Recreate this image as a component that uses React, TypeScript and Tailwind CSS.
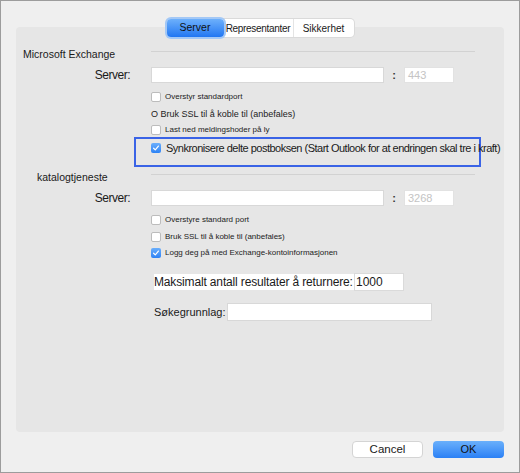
import React from 'react';

const Box = ({ checked }: { checked?: boolean }) =>
  checked ? (
    <span className="flex size-[10px] shrink-0 items-center justify-center rounded-[2px] bg-gradient-to-b from-[#6aaefb] to-[#2c82f5]">
      <svg viewBox="0 0 10 10" className="size-[8px]">
        <path d="M2 5.3 L4.1 7.3 L8 2.6" fill="none" stroke="white" strokeWidth="1.5" strokeLinecap="round" strokeLinejoin="round" />
      </svg>
    </span>
  ) : (
    <span className="block size-[10px] shrink-0 rounded-[2px] border border-[#bcbcbc] bg-white" />
  );

const CheckRow = ({ checked, label, className = '' }: { checked?: boolean; label: string; className?: string }) => (
  <div className={`flex h-[10px] items-center pl-[135px] ${className}`}>
    <Box checked={checked} />
    <span className="ml-[4px] whitespace-nowrap text-[8px] leading-[10px] text-[#222]">{label}</span>
  </div>
);

const ServerRow = ({ port, className = '' }: { port: string; className?: string }) => (
  <div className={`flex h-[16px] items-center ${className}`}>
    <span className="w-[135px] pr-[21px] text-right text-[12px] leading-[16px] tracking-[-0.5px] text-[#1a1a1a]">Server:</span>
    <div className="h-[16px] w-[233px] border border-[#d8d8d8] bg-white" />
    <span className="w-[20px] text-center text-[11px] font-bold leading-[16px] text-[#333]">:</span>
    <div className="flex h-[16px] w-[50px] items-center border border-[#e2e2e2] bg-white pl-[3px] text-[11px] text-[#c4c4c4]">{port}</div>
  </div>
);

const SectionHead = ({ title, indent, className = '' }: { title: string; indent: string; className?: string }) => (
  <div className={`flex h-[14px] items-start ${className}`}>
    <span className={`w-[135px] whitespace-nowrap text-[10.5px] leading-[14px] text-[#1a1a1a] ${indent}`}>{title}</span>
    <div className="mt-[4px] h-px w-[324px] bg-[#d2d2d2]" />
  </div>
);

export default function App() {
  return (
    <div className="flex h-[473px] w-[520px] flex-col border border-[#9c9c9c] bg-[#efefef] pt-[18px] font-['Liberation_Sans',Arial,sans-serif] text-[#1a1a1a]">
      {/* tabs */}
      <div className="relative z-10 flex justify-center">
        <div className="flex h-[18px] rounded-[4px] bg-white text-[10px] shadow-[0_0_0_1px_#dadada]">
          <div className="flex w-[57px] items-center justify-center rounded-[4px] bg-gradient-to-b from-[#6db0fb] to-[#1f76f2] text-[10.5px] text-[#111] shadow-[0_0_0_2px_#a3c8f6]">
            Server
          </div>
          <div className="flex w-[69px] items-center justify-center tracking-[-0.3px]">Representanter</div>
          <div className="flex w-[61px] items-center justify-center border-l border-[#e4e4e4]">Sikkerhet</div>
        </div>
      </div>

      {/* panel */}
      <div className="mx-[15px] -mt-[10px] flex h-[405px] flex-col rounded-[4px] bg-[#e6e6e6]">
        <SectionHead title="Microsoft Exchange" indent="pl-[7px]" className="mt-[20px]" />
        <ServerRow port="443" className="mt-[6px]" />
        <CheckRow label="Overstyr standardport" className="mt-[9px]" />
        <div className="mt-[6px] whitespace-nowrap pl-[135px] text-[9px] leading-[12px] text-[#222]">O Bruk SSL til å koble til (anbefales)</div>
        <CheckRow label="Last ned meldingshoder på ly" className="mt-[5px]" />

        <div className="ml-[118px] mt-[2px] flex h-[30px] w-[347px] items-start border-2 border-[#3a63e6] pl-[15px] pt-[2px]">
          <div className="flex h-[14px] items-center">
            <Box checked />
            <span className="ml-[5px] whitespace-nowrap text-[11px] leading-[14px] tracking-[-0.5px] text-[#1a1a1a]">
              Synkronisere delte postboksen (Start Outlook for at endringen skal tre i kraft)
            </span>
          </div>
        </div>

        <SectionHead title="katalogtjeneste" indent="pl-[21px]" className="mt-[3px]" />
        <ServerRow port="3268" className="mt-[6px]" />
        <CheckRow label="Overstyre standard port" className="mt-[9px]" />
        <CheckRow label="Bruk SSL til å koble til (anbefales)" className="mt-[7px]" />
        <CheckRow checked label="Logg deg på med Exchange-kontoinformasjonen" className="mt-[6px]" />

        <div className="mt-[15px] flex h-[18px] items-center pl-[138px]">
          <span className="h-[16px] w-[200px] overflow-hidden whitespace-nowrap bg-white text-[12px] leading-[16px] tracking-[-0.15px]">
            Maksimalt antall resultater å returnere:
          </span>
          <div className="flex h-[18px] w-[50px] items-center border border-[#dadada] bg-white pl-px text-[12px]">1000</div>
        </div>

        <div className="mt-[12px] flex h-[18px] items-center pl-[138px]">
          <span className="w-[73px] whitespace-nowrap text-[11px] leading-[16px]">Søkegrunnlag:</span>
          <div className="h-[18px] w-[205px] border border-[#d8d8d8] bg-white" />
        </div>
      </div>

      {/* buttons */}
      <div className="mt-[9px] flex justify-end gap-[10px] pr-[15px]">
        <button className="flex h-[17px] w-[71px] items-center justify-center rounded-[4px] border border-[#d4d4d4] bg-white text-[11.5px] text-[#1a1a1a]">
          Cancel
        </button>
        <button className="flex h-[17px] w-[71px] items-center justify-center rounded-[4px] bg-gradient-to-b from-[#6ab0fb] to-[#2a80f5] text-[11px] text-[#111]">
          OK
        </button>
      </div>
    </div>
  );
}
